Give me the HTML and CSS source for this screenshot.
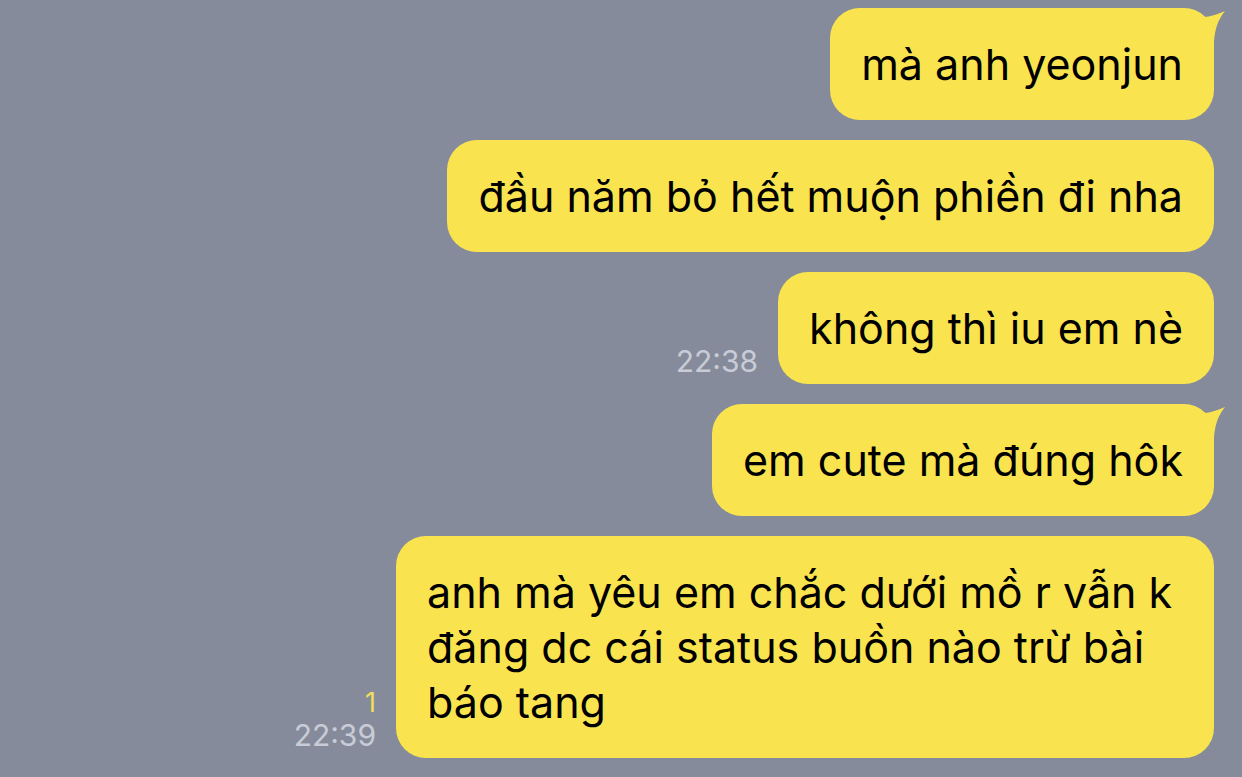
FILE: index.html
```html
<!DOCTYPE html>
<html lang="vi">
<head>
    <meta charset="UTF-8">
    <meta name="viewport" content="width=device-width, initial-scale=1.0">
    <title>Chat</title>
    <link rel="stylesheet" href="styles.css">
</head>
<body>
    <main class="chat">
        <div class="row">
            <div class="bubble has-tail">
                mà anh yeonjun
                <svg class="tail" viewBox="-20 0 32 36" width="32" height="36"><path d="M -20 10 C -11 10 0 8 11 3 C 4 12 1 20 0 34 L -20 34 Z"/></svg>
            </div>
        </div>
        <div class="row">
            <div class="bubble">đầu năm bỏ hết muộn phiền đi nha</div>
        </div>
        <div class="row">
            <div class="meta">
                <span class="time">22:38</span>
            </div>
            <div class="bubble">không thì iu em nè</div>
        </div>
        <div class="row">
            <div class="bubble has-tail">
                em cute mà đúng hôk
                <svg class="tail" viewBox="-20 0 32 36" width="32" height="36"><path d="M -20 10 C -11 10 0 8 11 3 C 4 12 1 20 0 34 L -20 34 Z"/></svg>
            </div>
        </div>
        <div class="row">
            <div class="meta">
                <span class="unread">1</span>
                <span class="time">22:39</span>
            </div>
            <div class="bubble">anh mà yêu em chắc dưới mồ r vẫn k đăng dc cái status buồn nào trừ bài báo tang</div>
        </div>
    </main>
</body>
</html>
```

FILE: styles.css
```css
html, body {
    margin: 0;
    height: 100%;
}

body {
    background: #858b9b;
    font-family: 'Inter', 'Noto Sans', sans-serif;
    overflow: hidden;
}

.chat {
    display: flex;
    flex-direction: column;
    align-items: flex-end;
    gap: 20px;
    padding: 8px 28px 0 0;
}

.row {
    display: flex;
    align-items: flex-end;
    gap: 20px;
}

.bubble {
    position: relative;
    max-width: 756px;
    padding: 29px 31px 28px;
    background: #f9e44f;
    border-radius: 30px;
    color: #000;
    font-size: 43px;
    line-height: 55px;
}

.bubble .tail {
    position: absolute;
    top: 0;
    right: -12px;
    fill: #f9e44f;
}

.meta {
    display: flex;
    flex-direction: column;
    align-items: flex-end;
    padding-bottom: 6px;
    font-family: 'Inter', 'Noto Sans', sans-serif;
    font-size: 30px;
    line-height: 34px;
}

.time {
    color: #c9ccd6;
}

.unread {
    color: #f3de5a;
    font-size: 27px;
    line-height: 30px;
}
```
